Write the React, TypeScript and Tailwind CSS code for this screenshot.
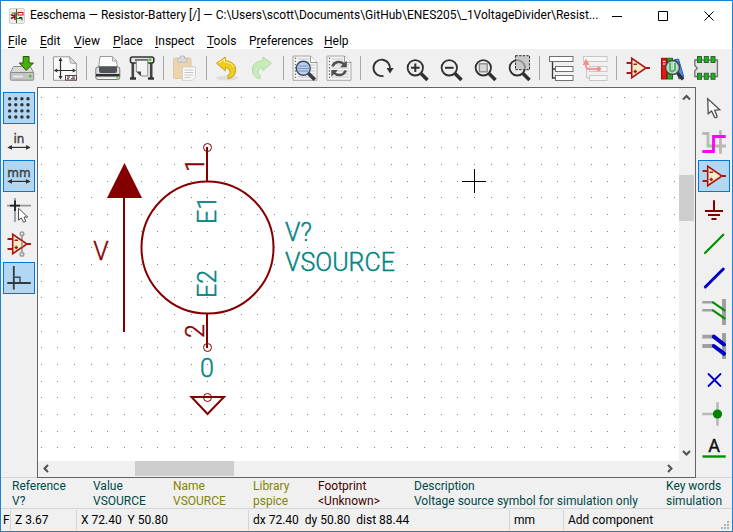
import type { ReactNode } from "react";

function Svg({ children }: { children: ReactNode }) {
  return (
    <svg viewBox="0 0 26 26" className="block size-[26px] shrink-0 overflow-visible" fill="none" aria-hidden="true">
      {children}
    </svg>
  );
}

/* ---------- shared icon parts ---------- */

function OpAmp() {
  return (
    <g stroke="#a81818" strokeWidth="1.4">
      <path d="M1.5 8H7M1.5 18H7M21 13H25" strokeWidth="2" />
      <path d="M6.7 3.3V22.7L21 13Z" fill="#f8ecc4" strokeWidth="1.6" />
      <path d="M8.5 9.3H12M8.5 16.5H12M10.2 14.8V18.2" />
    </g>
  );
}

function Lens({ children }: { children?: ReactNode }) {
  return (
    <>
      <path d="M18 18.5L24.5 25" stroke="#303030" strokeWidth="3.6" />
      <circle cx="12.3" cy="12.8" r="7.7" fill="#ececec" fillOpacity="0.7" stroke="#303030" strokeWidth="1.8" />
      {children}
    </>
  );
}

function NotePage() {
  return (
    <>
      <path d="M1 1H18.5L25 7.5V25.3H1Z" fill="#f4f4f4" stroke="#a8a8a8" />
      <path d="M18.5 1V7.5H25" fill="#fff" stroke="#989898" />
      <path d="M3.5 2.5V25" stroke="#707070" strokeWidth="1.2" strokeDasharray="1.4 1.8" />
      <path d="M6 4H17M6 7H17M6 10H23M6 13H23M6 16H23M6 19H23M6 22H23" stroke="#c8c8c8" />
    </>
  );
}

function DoubleArrow() {
  return (
    <>
      <path d="M3 18.4H23" stroke="#303030" strokeWidth="1.2" />
      <path d="M1.3 18.4L6 16V20.8ZM24.7 18.4L20 16V20.8Z" fill="#303030" />
    </>
  );
}

const pointer = "M6.7 3.7L7.2 18.6L10.6 15.9L13.6 22.2Q15 23.2 16.2 21.7L13.7 15.2L18.8 14.7Z";

/* ---------- top toolbar icons ---------- */

const saveIcon = (
  <Svg>
    <path d="M4.5 11.5H21.5L24.7 18H1.3Z" fill="#d8d8d8" stroke="#909090" />
    <rect x="1.3" y="17.5" width="23.4" height="7.7" rx="1" fill="#c4c4c4" stroke="#8c8c8c" />
    <path d="M4 21.5H14" stroke="#e8e8e8" strokeWidth="2" />
    <rect x="20" y="20" width="2.4" height="2.4" fill="#34c820" />
    <path d="M14.2 1.5H20V8H24.4L17.2 15.4L10.4 8H14.2Z" fill="#4cac10" stroke="#205c08" />
  </Svg>
);

const pageIcon = (
  <Svg>
    <path d="M1.5 1.8H17.5L24.4 8.5V25.3H1.5Z" fill="#fafafa" stroke="#989898" />
    <path d="M17.5 1.8L18.5 8L24.4 8.5Z" fill="#e4e4e4" stroke="#a0a0a0" />
    <path d="M8.5 4V23M3 15.5H23" stroke="#303030" strokeWidth="1.2" />
    <path d="M8.5 2.5L10.5 6H6.5ZM8.5 24.5L10.5 21H6.5ZM1.8 15.5L5.3 13.5V17.5ZM24.2 15.5L20.7 13.5V17.5Z" fill="#303030" />
    <rect x="13.5" y="20.5" width="11" height="4.6" fill="#fff" stroke="#604040" />
    <path d="M15 22H18M20 22H23M15 23.8H17M19 23.8H23" stroke="#303030" />
  </Svg>
);

const printIcon = (
  <Svg>
    <path d="M3.7 12L5 1.5H17.5L21.5 5.5L22.3 12Z" fill="#fbfbfb" stroke="#9c9c9c" />
    <path d="M17.5 1.5V6H21.5" fill="#e0e0e0" stroke="#a8a8a8" />
    <rect x="0.8" y="12" width="24" height="12.5" rx="2" fill="#dedede" stroke="#787878" />
    <path d="M4 11.5H22V16Q22 18 20 18H6Q4 18 4 16Z" fill="#505458" />
    <path d="M1 20.2H24.6" stroke="#303030" strokeWidth="2.6" />
    <path d="M3 23.2H23" stroke="#fff" />
    <circle cx="22.3" cy="22.8" r="1" fill="#58c828" />
  </Svg>
);

const plotIcon = (
  <Svg>
    <path d="M3.8 7V23M22.2 7V23" stroke="#404440" strokeWidth="2.6" />
    <path d="M1 23.5H7M19 23.5H25" stroke="#303430" strokeWidth="2.6" />
    <rect x="1.4" y="2" width="23.4" height="6" rx="2" fill="#e4e4e4" stroke="#303430" strokeWidth="1.6" />
    <path d="M6 5H19.5" stroke="#383c38" strokeWidth="1.4" />
    <rect x="20" y="3.5" width="2.4" height="2.4" fill="#48c820" />
    <path d="M7.3 5.5L7.3 16.5L12 21H18.8V5.5Z" fill="#f4f4f4" stroke="#888" />
    <path d="M7.3 16.5H12V21Z" fill="#444844" />
  </Svg>
);

const pasteIcon = (
  <Svg>
    <rect x="1.5" y="3" width="17.5" height="20.5" rx="1.5" fill="#ecd4ac" stroke="#dcc8a8" />
    <path d="M6 7V3.5H8.5V1H12.5V3.5H15V7Z" fill="#dcdcdc" stroke="#bcbcbc" />
    <path d="M10.5 12H23.5V22L20.5 25.3H10.5Z" fill="#fafafa" stroke="#d0d0d0" />
    <path d="M12.5 15H21.5M12.5 17.5H21.5M12.5 20H21.5M12.5 22.5H18.5" stroke="#c4c4c4" />
  </Svg>
);

const arrowShape = "M1.5 8.2L10.3 2V5.8C16.5 6 20.8 9.6 20.6 15.2C20.4 20 17.3 23.2 13 23.6V20.2C16 18.5 16 14 10.3 12.3V15.8Z";

const undoIcon = (
  <Svg>
    <ellipse cx="12" cy="23" rx="11" ry="2.6" fill="#dedede" />
    <path d={arrowShape} fill="#f0cc20" stroke="#cca010" />
    <path d="M3.5 8L9.5 4V7C14 7 17.5 9 18.5 12" stroke="#fff4a0" />
  </Svg>
);

const redoIcon = (
  <Svg>
    <g transform="translate(26 0) scale(-1 1)">
      <path d={arrowShape} transform="translate(2 0)" fill="#c8ecb8" stroke="#acdca0" />
    </g>
  </Svg>
);

const findIcon = (
  <Svg>
    <NotePage />
    <path d="M16 18L22.8 24.8" stroke="#383c44" strokeWidth="3.6" />
    <circle cx="11.3" cy="13.2" r="7" fill="#bcd0ec" stroke="#384860" strokeWidth="1.4" />
    <path d="M6 11H16.5M5.5 13.5H17M6 16H16.5" stroke="#7894c4" />
  </Svg>
);

const replaceIcon = (
  <Svg>
    <NotePage />
    <path d="M6.5 11.5C8 6.5 15 5.5 18 9.2M19.6 15.5C18.2 20.5 11.2 21.5 8.2 17.8" stroke="#505050" strokeWidth="2.6" />
    <path d="M20.8 5.5V12.3H14ZM5.3 21.7V15H12Z" fill="#505050" />
  </Svg>
);

const redrawIcon = (
  <Svg>
    <path d="M14.5 20.9A8.2 8.2 0 1 1 20.6 15" stroke="#303030" strokeWidth="1.8" />
    <path d="M17.6 13H24.6L21 18.5Z" fill="#303030" />
  </Svg>
);

const zoomInIcon = (
  <Svg>
    <Lens><path d="M8 12.8H16.6M12.3 8.5V17.1" stroke="#303030" strokeWidth="2" /></Lens>
  </Svg>
);

const zoomOutIcon = (
  <Svg>
    <Lens><path d="M8 12.8H16.6" stroke="#303030" strokeWidth="2" /></Lens>
  </Svg>
);

const zoomFitIcon = (
  <Svg>
    <Lens><rect x="8.4" y="8.8" width="7.8" height="8" fill="#d8d8d8" stroke="#888" strokeWidth="1.3" /></Lens>
  </Svg>
);

const zoomAreaIcon = (
  <Svg>
    <Lens />
    <rect x="10.5" y="0.7" width="14" height="14" fill="#b8b8b8" fillOpacity="0.7" stroke="#303030" strokeDasharray="2.4 1.2" />
  </Svg>
);

const hierarchyIcon = (
  <Svg>
    <path d="M4.5 6.5V23H7.5M4.5 14H7.5" stroke="#383838" strokeWidth="1.3" />
    <g fill="#fff" stroke="#707070">
      <rect x="1.5" y="1.5" width="23.5" height="5" />
      <rect x="7.5" y="11.5" width="17.5" height="5" />
      <rect x="7.5" y="20.5" width="17.5" height="5" />
    </g>
  </Svg>
);

const leaveSheetIcon = (
  <Svg>
    <path d="M4.5 6.5V23H7.5" stroke="#c8c8c8" />
    <g fill="#f6f6f6" stroke="#c8c8c8">
      <rect x="1.5" y="1.5" width="23.5" height="5" />
      <rect x="7.5" y="11.5" width="17.5" height="5" />
      <rect x="7.5" y="20.5" width="17.5" height="5" />
    </g>
    <path d="M16.5 14H7Q4 14 4 11V7" stroke="#f09898" strokeWidth="1.8" />
    <circle cx="16.7" cy="14" r="2.3" fill="#f09090" />
    <path d="M4 3.5L7.5 10H0.6Z" fill="#f09090" />
  </Svg>
);

const symbolIcon = <Svg><OpAmp /></Svg>;

const libraryIcon = (
  <Svg>
    <rect x="2.5" y="3.3" width="5" height="20.7" fill="#e01818" stroke="#a80808" />
    <rect x="8.5" y="3.3" width="5" height="20.7" fill="#28a828" stroke="#107810" />
    <path d="M14.5 5L19.5 4L24.8 22L20 24Z" fill="#4c8ce8" stroke="#2c60c0" />
    <path d="M4 6.5H6.5M4 9H6.5" stroke="#fff" />
    <path d="M18.5 18L24 24.5" stroke="#303030" strokeWidth="3.4" />
    <circle cx="13.5" cy="12.6" r="7" fill="#d0e8d8" fillOpacity="0.85" stroke="#484848" strokeWidth="1.5" />
    <path d="M11 8V15.5Q13.5 17.5 16 15V8" stroke="#58b868" strokeWidth="2" />
  </Svg>
);

const footprintIcon = (
  <Svg>
    <path d="M1.8 5H24.4V21.5H1.8V16L4.3 13.2L1.8 10.5Z" fill="#e4e4e4" stroke="#707070" strokeWidth="1.3" />
    <g fill="#10b818" stroke="#386038">
      <rect x="4.5" y="1.5" width="4" height="6" />
      <rect x="11.3" y="1.5" width="4" height="6" />
      <rect x="18" y="1.5" width="4" height="6" />
      <rect x="4.5" y="18.3" width="4" height="6" />
      <rect x="11.3" y="18.3" width="4" height="6" />
      <rect x="18" y="18.3" width="4" height="6" />
    </g>
  </Svg>
);

/* ---------- left toolbar icons ---------- */

const gridIcon = (
  <Svg>
    {[3.7, 9.8, 15.9, 22].map((y) =>
      [3.7, 9.8, 15.9, 22].map((x) => <circle key={`${x}-${y}`} cx={x} cy={y} r="1.7" fill="#303438" />),
    )}
  </Svg>
);

function UnitIcon({ unit }: { unit: string }) {
  return (
    <Svg>
      <text x="13" y="14" textAnchor="middle" fill="#404040" stroke="#404040" strokeWidth="0.4" className="font-['DejaVu_Sans',sans-serif] text-[12px]">
        {unit}
      </text>
      <DoubleArrow />
    </Svg>
  );
}

const cursorShapeIcon = (
  <Svg>
    <path d="M1 8.7H25M9 1V25" stroke="#989898" strokeWidth="1.8" />
    <path d="M4 8.7H14M9 3.5V14" stroke="#202020" strokeWidth="1.8" />
    <path d="M12.5 11.3V23.2L15.3 21L17.6 25.3L19.8 24.3L18 20H21.8Z" fill="#fff" stroke="#505050" />
  </Svg>
);

const hiddenPinIcon = (
  <Svg>
    <path d="M16 4V22" stroke="#989898" strokeWidth="1.6" />
    <OpAmp />
    <path d="M16 10V16" stroke="#989898" strokeWidth="1.6" />
    <circle cx="16" cy="2.7" r="1.9" fill="#ddd" stroke="#989898" strokeWidth="1.3" />
    <circle cx="16" cy="23.3" r="1.9" fill="#ddd" stroke="#989898" strokeWidth="1.3" />
  </Svg>
);

const orthoIcon = (
  <Svg>
    <path d="M8.5 12.3H14V18" stroke="#404850" strokeWidth="1.4" />
    <path d="M7.8 1V24.5M1.3 18H24.7" stroke="#303840" strokeWidth="1.8" />
  </Svg>
);

/* ---------- right toolbar icons ---------- */

const selectIcon = <Svg><path d={pointer} fill="#fafafa" stroke="#505050" strokeWidth="1.3" /></Svg>;

const highlightNetIcon = (
  <Svg>
    <path d="M1.3 4.5H7V17H25M19.5 1.3V24.7" stroke="#b8b8b8" strokeWidth="2.8" />
    <path d="M1.3 22.5H12.5V7.5H24.7" stroke="#ff00ff" strokeWidth="2.8" />
  </Svg>
);

const powerIcon = (
  <Svg><path d="M13 3.3V14M4 14H22M7 18H19M10.5 22H15.5" stroke="#840000" strokeWidth="2" /></Svg>
);

const wireIcon = <Svg><path d="M4 22L22.3 3.7" stroke="#009000" strokeWidth="2.2" strokeLinecap="round" /></Svg>;

const busIcon = <Svg><path d="M4.3 22L22.3 4" stroke="#0000c8" strokeWidth="3" strokeLinecap="round" /></Svg>;

const wireEntryIcon = (
  <Svg>
    <path d="M23 0V26" stroke="#a0a0a0" strokeWidth="4" />
    <path d="M1.3 3.3H12M1.3 11.3H12" stroke="#a0a0a0" strokeWidth="2.4" />
    <path d="M12 3.3L23.5 11.3M12 11.3L23.5 19.3" stroke="#009000" strokeWidth="2.2" strokeLinecap="round" />
  </Svg>
);

const busEntryIcon = (
  <Svg>
    <path d="M23 0V26" stroke="#a0a0a0" strokeWidth="4" />
    <path d="M1.3 3.7H12M1.3 13H12" stroke="#a0a0a0" strokeWidth="3.8" />
    <path d="M12.8 3.7L23 11.5M12.8 13L23 20.7" stroke="#0000c8" strokeWidth="4" strokeLinecap="round" />
  </Svg>
);

const noConnectIcon = <Svg><path d="M7.5 7L19.5 19M19.5 7L7.5 19" stroke="#0000c8" strokeWidth="1.8" strokeLinecap="round" /></Svg>;

const junctionIcon = (
  <Svg>
    <path d="M1.3 13H16.5M16.5 1.3V24.7" stroke="#b8b8b8" strokeWidth="2.6" />
    <circle cx="16.5" cy="13" r="4.6" fill="#008400" />
  </Svg>
);

const labelIcon = (
  <Svg>
    <text x="13" y="17" textAnchor="middle" fill="#101010" stroke="#101010" strokeWidth="0.4" className="font-['Roboto',sans-serif] text-[18px]">
      A
    </text>
    <path d="M1.5 21.5H24.7" stroke="#009000" strokeWidth="2.4" />
  </Svg>
);

/* ---------- toolbars ---------- */

type Tool = { label: string; icon: ReactNode; active?: boolean };

const topTools: Tool[][] = [
  [{ label: "Save", icon: saveIcon }],
  [{ label: "Page settings", icon: pageIcon }],
  [{ label: "Print", icon: printIcon }, { label: "Plot", icon: plotIcon }],
  [{ label: "Paste", icon: pasteIcon }],
  [{ label: "Undo", icon: undoIcon }, { label: "Redo", icon: redoIcon }],
  [{ label: "Find", icon: findIcon }, { label: "Find and replace", icon: replaceIcon }],
  [
    { label: "Redraw", icon: redrawIcon },
    { label: "Zoom in", icon: zoomInIcon },
    { label: "Zoom out", icon: zoomOutIcon },
    { label: "Zoom to fit", icon: zoomFitIcon },
    { label: "Zoom to selection", icon: zoomAreaIcon },
  ],
  [{ label: "Hierarchy", icon: hierarchyIcon }, { label: "Leave sheet", icon: leaveSheetIcon }],
  [
    { label: "Symbol editor", icon: symbolIcon },
    { label: "Symbol libraries", icon: libraryIcon },
    { label: "Footprint editor", icon: footprintIcon },
  ],
];

const leftTools: Tool[] = [
  { label: "Show grid", icon: gridIcon, active: true },
  { label: "Inches", icon: <UnitIcon unit="in" /> },
  { label: "Millimeters", icon: <UnitIcon unit="mm" />, active: true },
  { label: "Cursor shape", icon: cursorShapeIcon },
  { label: "Hidden pins", icon: hiddenPinIcon },
  { label: "Orthogonal wires", icon: orthoIcon, active: true },
];

const rightTools: Tool[] = [
  { label: "Select", icon: selectIcon },
  { label: "Highlight net", icon: highlightNetIcon },
  { label: "Place symbol", icon: symbolIcon, active: true },
  { label: "Place power port", icon: powerIcon },
  { label: "Place wire", icon: wireIcon },
  { label: "Place bus", icon: busIcon },
  { label: "Wire to bus entry", icon: wireEntryIcon },
  { label: "Bus to bus entry", icon: busEntryIcon },
  { label: "No connect", icon: noConnectIcon },
  { label: "Junction", icon: junctionIcon },
  { label: "Net label", icon: labelIcon },
];

function SideBar({ tools }: { tools: Tool[] }) {
  return (
    <div className="flex w-9 shrink-0 flex-col items-center gap-0.5 border-b border-[#d4d4d4] pt-[5px]">
      {tools.map((t) => (
        <button
          key={t.label}
          type="button"
          aria-label={t.label}
          className={`flex size-8 shrink-0 items-center justify-center border ${
            t.active ? "border-[#0078d7] bg-[#b3d7f3]" : "border-transparent"
          }`}
        >
          {t.icon}
        </button>
      ))}
    </div>
  );
}

/* ---------- menu ---------- */

const menus = [
  { pre: "", key: "F", post: "ile", width: "w-8" },
  { pre: "", key: "E", post: "dit", width: "w-[34px]" },
  { pre: "", key: "V", post: "iew", width: "w-[39px]" },
  { pre: "", key: "P", post: "lace", width: "w-[42px]" },
  { pre: "", key: "I", post: "nspect", width: "w-[52px]" },
  { pre: "", key: "T", post: "ools", width: "w-[42px]" },
  { pre: "P", key: "r", post: "eferences", width: "w-[75px]" },
  { pre: "", key: "H", post: "elp", width: "w-10" },
];

/* ---------- schematic ---------- */

function Schematic() {
  return (
    <svg className="block size-full" role="img" aria-label="Schematic sheet">
      <g transform="translate(-38 -88)">
        <defs>
          <pattern id="grid" x="41" y="97" width="50" height="50" patternUnits="userSpaceOnUse">
            {[0, 17, 34].map((y) =>
              [0, 16, 33].map((x) => <rect key={`${x}-${y}`} x={x} y={y} width="1" height="1" fill="#848484" />),
            )}
          </pattern>
        </defs>
        <rect x="38" y="88" width="100%" height="100%" fill="url(#grid)" />

        <g stroke="#840000" strokeWidth="2" fill="none">
          <circle cx="207.5" cy="247.5" r="66" />
          <path d="M207 147V182M207 313V348M124 190V332" />
          <path d="M191.5 397H224L207.5 414Z" />
          <g strokeWidth="1">
            <circle cx="207.5" cy="147.5" r="4" />
            <circle cx="207.5" cy="347.5" r="4" />
            <circle cx="207.5" cy="397.5" r="4" />
          </g>
        </g>
        <path d="M124.5 163L107 198H142Z" fill="#840000" />

        <g className="font-['Roboto',sans-serif] text-[25px] font-light" strokeWidth="0.4">
          <g fill="#840000" stroke="#840000" textAnchor="middle">
            <text x="101" y="260">V</text>
            <text transform="translate(204 165) rotate(-90)">1</text>
            <text transform="translate(204 331) rotate(-90)">2</text>
          </g>
          <g fill="#008484" stroke="#008484">
            <g textAnchor="middle">
              <text transform="translate(216 210) rotate(-90)">E1</text>
              <text transform="translate(216 284) rotate(-90)">E2</text>
              <text x="207" y="377">0</text>
            </g>
            <text x="285" y="241">V?</text>
            <text x="285" y="271">VSOURCE</text>
          </g>
        </g>

        <path d="M462 181.5H486M474.5 169V193" stroke="#000" />
      </g>
    </svg>
  );
}

function Chevron({ d }: { d: string }) {
  return (
    <svg viewBox="0 0 15 15" className="block size-[15px]" fill="none" aria-hidden="true">
      <path d={d} stroke="#505050" strokeWidth="2" />
    </svg>
  );
}

/* ---------- footer ---------- */

const info = [
  { name: "Reference", value: "V?", color: "text-[#004848]" },
  { name: "Value", value: "VSOURCE", color: "text-[#004848]" },
  { name: "Name", value: "VSOURCE", color: "text-[#848400]" },
  { name: "Library", value: "pspice", color: "text-[#848400]" },
  { name: "Footprint", value: "<Unknown>", color: "text-[#480000]" },
  { name: "Description", value: "Voltage source symbol for simulation only", color: "text-[#004848]" },
  { name: "Key words", value: "simulation", color: "text-[#004848]" },
];

const status = [
  { text: "F", width: "w-[7px]" },
  { text: "Z 3.67", width: "w-[66px]" },
  { text: "X 72.40  Y 50.80", width: "w-[172px]" },
  { text: "dx 72.40  dy 50.80  dist 88.44", width: "w-[261px]" },
  { text: "mm", width: "w-[54px]" },
  { text: "Add component", width: "flex-1" },
];

export default function App() {
  return (
    <div className="flex h-screen flex-col overflow-hidden border border-[#1883d7] bg-[#f0f0f0] font-['Roboto','Noto_Sans',sans-serif] text-[12px] leading-[15px] text-black">
      <header className="flex h-[29px] shrink-0 items-center bg-white pl-2">
        <svg viewBox="0 0 16 16" className="mr-[5px] size-4 shrink-0" fill="none" aria-hidden="true">
          <rect x="0.5" y="0.5" width="15" height="15" rx="1.5" fill="#eeeeea" stroke="#d0d0cc" />
          <path d="M7.5 1V15M3 5H7.5M7.5 10.5H13" stroke="#207820" />
          <rect x="9" y="4.5" width="5" height="2.5" fill="#fff" stroke="#c01010" />
          <path d="M2 6.5L6 8.5M2 10.5L6 8.5M6 5.5V12" stroke="#801010" strokeWidth="1.4" />
          <path d="M10 9.5H13V12.5" stroke="#303030" />
        </svg>
        <h1 className="min-w-0 flex-1 whitespace-nowrap">
          Eeschema — Resistor-Battery [/] — C:\Users\scott\Documents\GitHub\ENES205\_1VoltageDivider\Resist...
        </h1>
        {[
          { label: "Minimize", d: "M0 5.5H10" },
          { label: "Maximize", d: "M0.5 0.5H9.5V9.5H0.5Z" },
          { label: "Close", d: "M0.5 0.5L9.5 9.5M9.5 0.5L0.5 9.5" },
        ].map((b) => (
          <button key={b.label} type="button" aria-label={b.label} className="flex h-full w-[46px] shrink-0 items-center justify-center">
            <svg viewBox="0 0 10 10" className="size-[10px]" fill="none" aria-hidden="true">
              <path d={b.d} stroke="#000" />
            </svg>
          </button>
        ))}
      </header>

      <nav className="flex h-[19px] shrink-0 bg-white pl-[7px]">
        {menus.map((m) => (
          <button key={m.key} type="button" className={`${m.width} shrink-0 pt-[3px] text-left whitespace-nowrap`}>
            {m.pre}
            <span className="underline underline-offset-2">{m.key}</span>
            {m.post}
          </button>
        ))}
      </nav>

      <div className="flex h-[38px] shrink-0 items-center pl-1">
        {topTools.map((group, i) => (
          <div key={group[0].label} className="flex items-center">
            {i > 0 && <span className="mx-1 h-6 w-px bg-[#a8a8a8]" />}
            {group.map((t) => (
              <button key={t.label} type="button" aria-label={t.label} className="flex h-8 w-[34px] shrink-0 items-center justify-center">
                {t.icon}
              </button>
            ))}
          </div>
        ))}
      </div>

      <main className="flex min-h-0 flex-1">
        <SideBar tools={leftTools} />
        <div className="flex min-w-0 flex-1 flex-col border border-[#646464]">
          <div className="flex min-h-0 flex-1">
            <div className="min-w-0 flex-1 overflow-hidden bg-white">
              <Schematic />
            </div>
            <div className="flex w-4 shrink-0 flex-col pt-0.5 pr-px">
              <Chevron d="M4 9.5L7.5 6L11 9.5" />
              <div className="flex flex-1 flex-col pt-[70px]">
                <div className="h-[46px] bg-[#cdcdcd]" />
              </div>
              <Chevron d="M4 5L7.5 8.5L11 5" />
            </div>
          </div>
          <div className="flex h-4 shrink-0 pr-[17px] pb-px">
            <Chevron d="M10 4L6.5 7.5L10 11" />
            <div className="flex flex-1 pl-[82px]">
              <div className="w-[99px] bg-[#cdcdcd]" />
            </div>
            <Chevron d="M5 4L8.5 7.5L5 11" />
          </div>
        </div>
        <SideBar tools={rightTools} />
      </main>

      <dl className="grid h-[31px] shrink-0 grid-cols-[81px_80px_80px_65px_96px_252px_1fr] border-b border-[#d4d4d4] pt-px pl-[11px] whitespace-nowrap">
        {info.map((f) => (
          <div key={f.name} className={f.color}>
            <dt>{f.name}</dt>
            <dd>{f.value}</dd>
          </div>
        ))}
      </dl>

      <footer className="flex h-[22px] shrink-0 items-center pl-0.5">
        {status.map((s, i) => (
          <div
            key={s.text}
            className={`${s.width} flex h-5 shrink-0 items-center whitespace-pre ${i > 0 ? "border-l border-[#d4d4d4] pl-1" : ""}`}
          >
            {s.text}
          </div>
        ))}
        <svg viewBox="0 0 10 10" className="mr-0.5 size-[10px] shrink-0 self-end" fill="#b4b4b4" aria-hidden="true">
          <path d="M7 0h2v2h-2zM4 3h2v2h-2zM7 3h2v2h-2zM1 6h2v2h-2zM4 6h2v2h-2zM7 6h2v2h-2z" />
        </svg>
      </footer>
    </div>
  );
}
